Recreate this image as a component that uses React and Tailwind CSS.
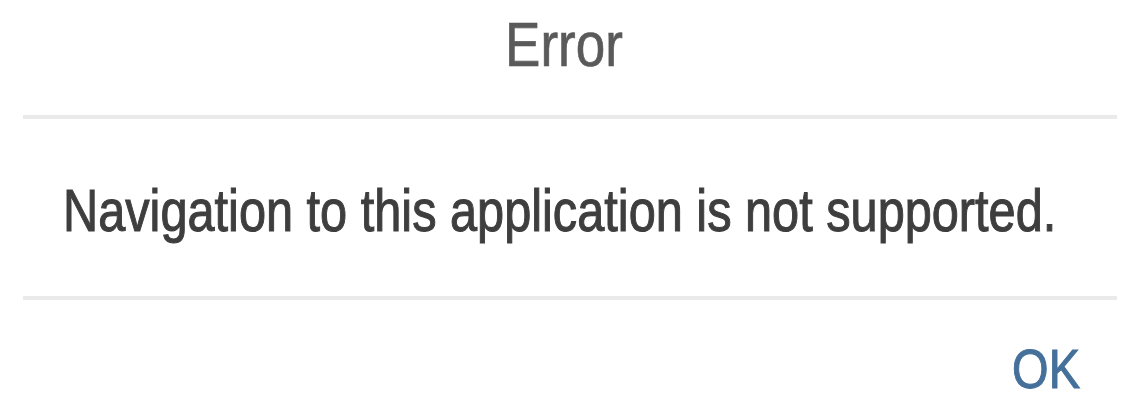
export default function App() {
  return (
    <div className="w-[1145px] h-[411px] bg-white overflow-hidden" style={{ fontFamily: '"Liberation Sans", Arial, sans-serif' }}>
      {/* Header */}
      <div className="h-[115px] pt-[21px] pr-[17px] flex justify-center">
        <h1 className="text-[53px] leading-[53px] text-[#5a5a5a] scale-y-[1.2] [-webkit-text-stroke:0.6px]">Error</h1>
      </div>
      <div className="h-[4px] ml-[23px] mr-[28px] bg-[#eaeaea]" />

      {/* Message */}
      <div className="pt-[68px] pl-[63px]">
        <p className="text-[48.7px] leading-[48.7px] text-[#3e3e3e] scale-y-[1.2] whitespace-nowrap [-webkit-text-stroke:0.9px]">
          Navigation to this application is not supported.
        </p>
      </div>
      <div className="mt-[60px] h-[4px] ml-[23px] mr-[28px] bg-[#eaeaea]" />

      {/* Footer */}
      <div className="pt-[45px] pr-[65px] flex justify-end">
        <button className="text-[47px] leading-[47px] text-[#44709a] scale-y-[1.2] [-webkit-text-stroke:0.9px]">OK</button>
      </div>
    </div>
  );
}
